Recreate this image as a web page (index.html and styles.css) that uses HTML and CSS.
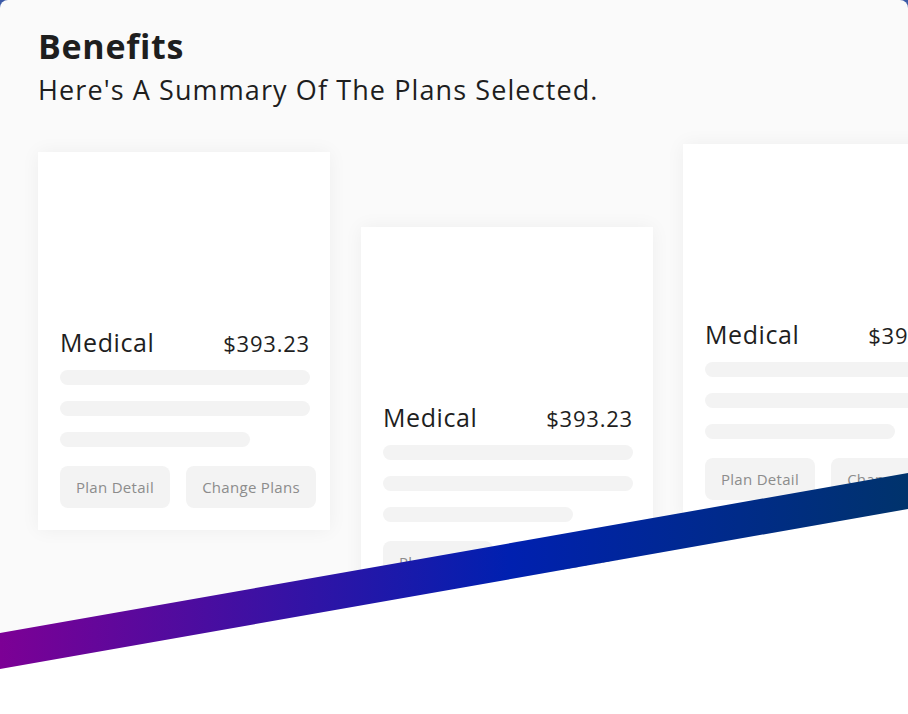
FILE: index.html
```html
<!DOCTYPE html>
<html lang="en">
<head>
<meta charset="utf-8">
<title>Benefits</title>
<link rel="stylesheet" href="styles.css">
</head>
<body>
<div class="panel">
  <header class="head">
    <h1 class="title">Benefits</h1>
    <p class="subtitle">Here's A Summary Of The Plans Selected.</p>
  </header>
  <div class="cards">
    <div class="card card-a">
      <div class="card-row"><span class="plan">Medical</span><span class="price">$393.23</span></div>
      <div class="bar"></div>
      <div class="bar"></div>
      <div class="bar bar-short"></div>
      <div class="actions"><button class="btn btn-detail">Plan Detail</button><button class="btn btn-change">Change Plans</button></div>
    </div>
    <div class="card card-b">
      <div class="card-row"><span class="plan">Medical</span><span class="price">$393.23</span></div>
      <div class="bar"></div>
      <div class="bar"></div>
      <div class="bar bar-short"></div>
      <div class="actions"><button class="btn btn-detail">Plan Detail</button><button class="btn btn-change">Change Plans</button></div>
    </div>
    <div class="card card-c">
      <div class="card-row"><span class="plan">Medical</span><span class="price">$393.23</span></div>
      <div class="bar"></div>
      <div class="bar"></div>
      <div class="bar bar-short"></div>
      <div class="actions"><button class="btn btn-detail">Plan Detail</button><button class="btn btn-change">Change Plans</button></div>
    </div>
  </div>
  <svg class="swoosh" width="908" height="714" viewBox="0 0 908 714" aria-hidden="true">
    <defs>
      <linearGradient id="stripe" x1="0" y1="0" x2="908" y2="0" gradientUnits="userSpaceOnUse">
        <stop offset="0" stop-color="#7c0095"/>
        <stop offset="0.56" stop-color="#0020b0"/>
        <stop offset="1" stop-color="#00336c"/>
      </linearGradient>
    </defs>
    <polygon points="0,669 908,509 908,714 0,714" fill="#ffffff"/>
    <polygon points="0,633 908,473 908,509 0,669" fill="url(#stripe)"/>
  </svg>
</div>
</body>
</html>
```
FILE: styles.css
```css
* { box-sizing: border-box; }
html, body { margin: 0; padding: 0; }
body {
  background: #3b5aa7;
  width: 908px;
  height: 714px;
  overflow: hidden;
  font-family: "Open Sans", "Noto Sans", sans-serif;
  color: #1e1e1e;
}
.panel {
  position: relative;
  width: 908px;
  height: 714px;
  background: #fafafa;
  border-radius: 8px 8px 0 0;
  overflow: hidden;
}
.head {
  padding: 23px 0 0 38px;
}
.title {
  margin: 0;
  font-size: 34px;
  line-height: 46px;
  font-weight: 700;
  letter-spacing: 0.7px;
}
.subtitle {
  margin: 4px 0 0;
  font-size: 27px;
  line-height: 34px;
  font-weight: 400;
  letter-spacing: 1.1px;
}
.cards {
  display: flex;
  align-items: flex-start;
  gap: 31px;
  padding-left: 38px;
}
.card {
  flex: 0 0 292px;
  width: 292px;
  background: #ffffff;
  padding: 172px 20px 22px 22px;
  box-shadow: 0 0 18px rgba(0, 0, 0, 0.05);
}
.card-a { margin-top: 45px; }
.card-b { margin-top: 120px; }
.card-c { margin-top: 37px; margin-left: -1px; }
.card-row {
  display: flex;
  justify-content: space-between;
  align-items: baseline;
  height: 36px;
  margin-bottom: 10px;
}
.plan {
  font-size: 25px;
  line-height: 36px;
  letter-spacing: 0.6px;
}
.price {
  font-size: 22px;
  line-height: 36px;
  letter-spacing: 0.8px;
}
.bar {
  height: 15px;
  border-radius: 8px;
  background: #f3f3f3;
  margin-bottom: 16px;
}
.bar-short { width: 190px; margin-bottom: 19px; }
.actions {
  display: flex;
  gap: 16px;
  width: 260px;
}
.btn {
  border: 0;
  background: #f3f3f3;
  border-radius: 8px;
  height: 42px;
  font-family: inherit;
  font-size: 15px;
  color: #8c8c8c;
  letter-spacing: 0.3px;
  padding: 0;
  flex: 0 0 auto;
}
.btn-detail { width: 110px; }
.btn-change { width: 130px; }
.swoosh {
  position: absolute;
  left: 0;
  top: 0;
}
```
